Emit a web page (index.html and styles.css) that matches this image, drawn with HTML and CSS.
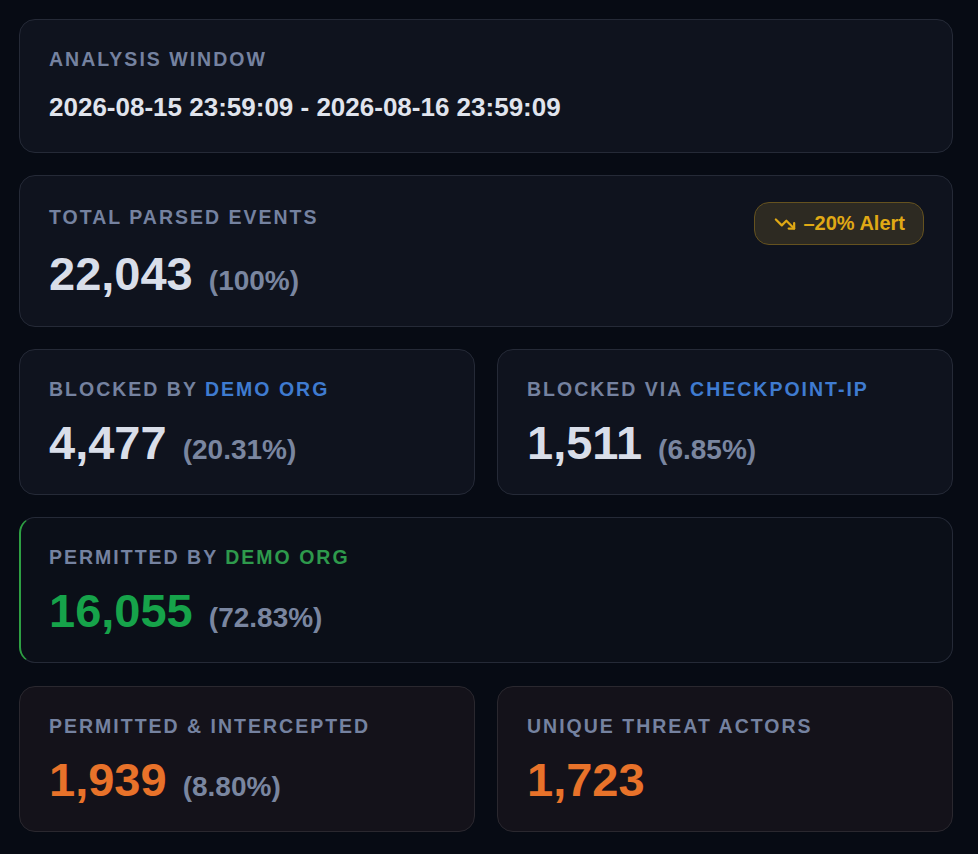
FILE: index.html
```html
<!DOCTYPE html>
<html lang="en">
<head>
<meta charset="utf-8">
<title>Analysis Summary</title>
<link rel="stylesheet" href="styles.css">
</head>
<body>
<main class="stack">
  <section class="card">
    <div class="label">Analysis Window</div>
    <div class="date">2026-08-15 23:59:09 - 2026-08-16 23:59:09</div>
  </section>

  <section class="card card-total">
    <div class="label">Total Parsed Events</div>
    <div class="value-row"><span class="value">22,043</span> <span class="pct">(100%)</span></div>
    <div class="badge">
      <svg class="badge-icon" viewBox="0 0 24 24" width="22" height="22" fill="none" stroke="currentColor" stroke-width="2.4" stroke-linecap="round" stroke-linejoin="round" aria-hidden="true">
        <polyline points="22 17 13.5 8.5 8.5 13.5 2 7"></polyline>
        <polyline points="16 17 22 17 22 11"></polyline>
      </svg>
      <span>–20% Alert</span>
    </div>
  </section>

  <div class="row">
    <section class="card">
      <div class="label">Blocked by <span class="hl-blue">Demo Org</span></div>
      <div class="value-row"><span class="value">4,477</span> <span class="pct">(20.31%)</span></div>
    </section>
    <section class="card">
      <div class="label">Blocked via <span class="hl-blue">Checkpoint-IP</span></div>
      <div class="value-row"><span class="value">1,511</span> <span class="pct">(6.85%)</span></div>
    </section>
  </div>

  <section class="card card-permitted">
    <div class="label">Permitted by <span class="hl-green">Demo Org</span></div>
    <div class="value-row"><span class="value green">16,055</span> <span class="pct">(72.83%)</span></div>
  </section>

  <div class="row row-last">
    <section class="card card-warm">
      <div class="label">Permitted &amp; Intercepted</div>
      <div class="value-row"><span class="value orange">1,939</span> <span class="pct">(8.80%)</span></div>
    </section>
    <section class="card card-warm">
      <div class="label">Unique Threat Actors</div>
      <div class="value-row"><span class="value orange">1,723</span></div>
    </section>
  </div>
</main>
</body>
</html>
```

FILE: styles.css
```css
* { box-sizing: border-box; }

html, body {
  margin: 0;
  padding: 0;
  background: #070b14;
}

body {
  font-family: "Liberation Sans", Arial, Helvetica, sans-serif;
  color: #dde2ec;
  min-height: 854px;
}

.stack {
  width: 934px;
  margin: 0 0 0 19px;
  padding-top: 19px;
  display: flex;
  flex-direction: column;
  gap: 22px;
}

.row {
  display: grid;
  grid-template-columns: 1fr 1fr;
  gap: 22px;
}

.row-last { margin-top: 1px; }

.card {
  position: relative;
  background: #0f131e;
  border: 1px solid #252a37;
  border-radius: 16px;
  padding: 27px 29px 27px 29px;
  display: flex;
  flex-direction: column;
  gap: 18px;
}

.label {
  font-size: 19.5px;
  line-height: 24px;
  font-weight: 700;
  letter-spacing: 2px;
  text-transform: uppercase;
  color: #7582a0;
  white-space: nowrap;
}

.hl-blue { color: #3f7bd0; }
.hl-green { color: #2e9a4c; }

.date {
  font-size: 26px;
  line-height: 36px;
  font-weight: 700;
  color: #e0e4ed;
}

.value-row {
  font-size: 47px;
  line-height: 48px;
  font-weight: 700;
  white-space: nowrap;
}

.value { color: #d9dee9; }
.value.green { color: #16a34a; }
.value.orange { color: #e8722a; }

.pct {
  margin-left: 3px;
  font-size: 28px;
  line-height: 1;
  color: #7a86a0;
}

.card-total {
  padding-top: 29px;
  padding-bottom: 28px;
  gap: 21px;
}

.badge {
  position: absolute;
  top: 26px;
  right: 28px;
  height: 43px;
  display: flex;
  align-items: center;
  gap: 7px;
  padding: 0 18px 0 19px;
  border: 1px solid #65521f;
  border-radius: 15px;
  background: #2d2a22;
  color: #e0a915;
  font-size: 20px;
  font-weight: 700;
  white-space: nowrap;
}

.badge-icon { display: block; flex: none; }

.card-permitted {
  background: #0b0f18;
  border-left: 2px solid #2ea043;
  padding-left: 28px;
}

.card-warm {
  background: #14121a;
  border-color: #2a282f;
}
```
